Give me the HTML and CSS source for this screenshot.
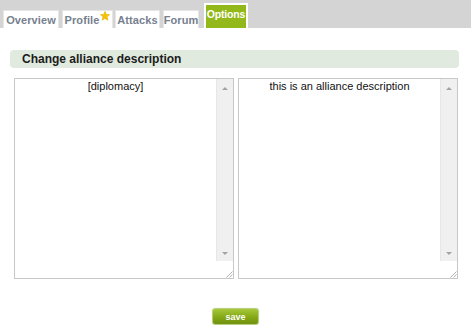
FILE: index.html
```html
<!DOCTYPE html>
<html>
<head>
<meta charset="utf-8">
<link rel="stylesheet" href="styles.css">
</head>
<body>
<div class="tabbar">
  <a class="tab tab-overview">Overview</a>
  <a class="tab tab-profile">Profile<svg class="star" width="10" height="10" viewBox="0 0 10 10"><polygon points="5,0.3 6.3,3.4 9.7,3.6 7.1,5.8 7.9,9.3 5,7.4 2.1,9.3 2.9,5.8 0.3,3.6 3.7,3.4" fill="#f5c400" stroke="#e0a800" stroke-width="0.5"/></svg></a>
  <a class="tab tab-attacks">Attacks</a>
  <a class="tab tab-forum">Forum</a>
  <a class="tab active">Options</a>
</div>
<div class="content">
  <h2 class="section-title">Change alliance description</h2>
  <div class="editors">
    <div class="editor">
      <textarea class="desc">[diplomacy]</textarea>
      <div class="scrollbar">
        <span class="arrow up"></span>
        <span class="track"></span>
        <span class="arrow down"></span>
        <span class="grip"><svg width="8" height="8" viewBox="0 0 8 8"><path d="M7.5 1.5 L1.5 7.5 M7.5 4.5 L4.5 7.5" stroke="#a0a0a0" stroke-width="0.8" fill="none"/></svg></span>
      </div>
    </div>
    <div class="editor">
      <textarea class="desc">this is an alliance description</textarea>
      <div class="scrollbar">
        <span class="arrow up"></span>
        <span class="track"></span>
        <span class="arrow down"></span>
        <span class="grip"><svg width="8" height="8" viewBox="0 0 8 8"><path d="M7.5 1.5 L1.5 7.5 M7.5 4.5 L4.5 7.5" stroke="#a0a0a0" stroke-width="0.8" fill="none"/></svg></span>
      </div>
    </div>
  </div>
  <div class="actions">
    <button class="save">save</button>
  </div>
</div>
</body>
</html>
```
FILE: styles.css
```css
html, body {
  margin: 0;
  padding: 0;
  background: #ffffff;
  font-family: "Liberation Sans", Arial, sans-serif;
}
.tabbar {
  height: 28px;
  background: #d4d4d4;
  display: flex;
  align-items: flex-end;
  padding-left: 3px;
  box-sizing: border-box;
}
.tab {
  display: flex;
  align-items: flex-start;
  justify-content: center;
  height: 18px;
  box-sizing: border-box;
  padding-top: 3px;
  background: #ffffff;
  border: 1px solid #e6e6e6;
  border-bottom: none;
  color: #76808e;
  font-size: 11px;
  font-weight: bold;
  letter-spacing: 0.1px;
  line-height: 13px;
  white-space: nowrap;
}
.tab-overview { width: 56px; }
.tab-profile { width: 51px; margin-left: 3px; }
.tab-attacks { width: 45px; margin-left: 2px; }
.tab-forum { width: 36px; margin-left: 3px; }
.star {
  margin-left: 1px;
  margin-top: -3px;
}
.tab.active {
  width: 44px;
  height: 25px;
  margin-left: 5px;
  background: #92b81a;
  border: 2px solid #ffffff;
  border-bottom: none;
  color: #ffffff;
  padding-top: 3px;
  font-size: 10.5px;
  letter-spacing: -0.2px;
}
.content {
  padding: 22px 12px 0 10px;
}
.section-title {
  margin: 0;
  height: 18px;
  background: #e0eadf;
  border-radius: 4px;
  font-size: 12px;
  font-weight: bold;
  color: #1c1c1c;
  line-height: 18px;
  padding-left: 12px;
}
.editors {
  display: flex;
  gap: 4px;
  margin-top: 10px;
  padding-left: 4px;
}
.editor {
  width: 220px;
  height: 201px;
  box-sizing: border-box;
  border: 1px solid #c8c8c8;
  display: flex;
  background: #fff;
}
.desc {
  flex: 1;
  min-width: 0;
  margin: 0;
  border: none;
  outline: none;
  padding: 1px 2px;
  font-family: "Liberation Sans", Arial, sans-serif;
  font-size: 11px;
  color: #111111;
  text-align: center;
  overflow: hidden;
  resize: none;
  background: transparent;
}
.scrollbar {
  width: 17px;
  display: flex;
  flex-direction: column;
  background: #f0f0f0;
  border-left: 1px solid #e6e6e6;
  box-sizing: border-box;
}
.arrow {
  height: 15px;
  display: flex;
  align-items: center;
  justify-content: center;
}
.arrow::before {
  content: "";
  width: 0;
  height: 0;
  border-left: 3px solid transparent;
  border-right: 3px solid transparent;
}
.arrow.up::before { border-bottom: 3px solid #a3a3a3; }
.arrow.down::before { border-top: 3px solid #a3a3a3; }
.arrow.up { margin-top: 2px; }
.track { flex: 1; }
.grip {
  height: 17px;
  background: #ffffff;
  display: flex;
  align-items: flex-end;
  justify-content: flex-end;
  margin-left: -1px;
}
.actions {
  display: flex;
  justify-content: center;
  margin-top: 29px;
  padding-left: 2px;
}
.save {
  width: 47px;
  height: 17px;
  border: 1px solid #b8cf80;
  border-radius: 3px;
  background: linear-gradient(#a6c83a, #84a815 55%, #6f9210);
  color: #ffffff;
  font-family: "Liberation Sans", Arial, sans-serif;
  font-size: 9px;
  font-weight: bold;
  padding: 0;
  box-shadow: 0 0 1px #c8d8a0;
}
```
